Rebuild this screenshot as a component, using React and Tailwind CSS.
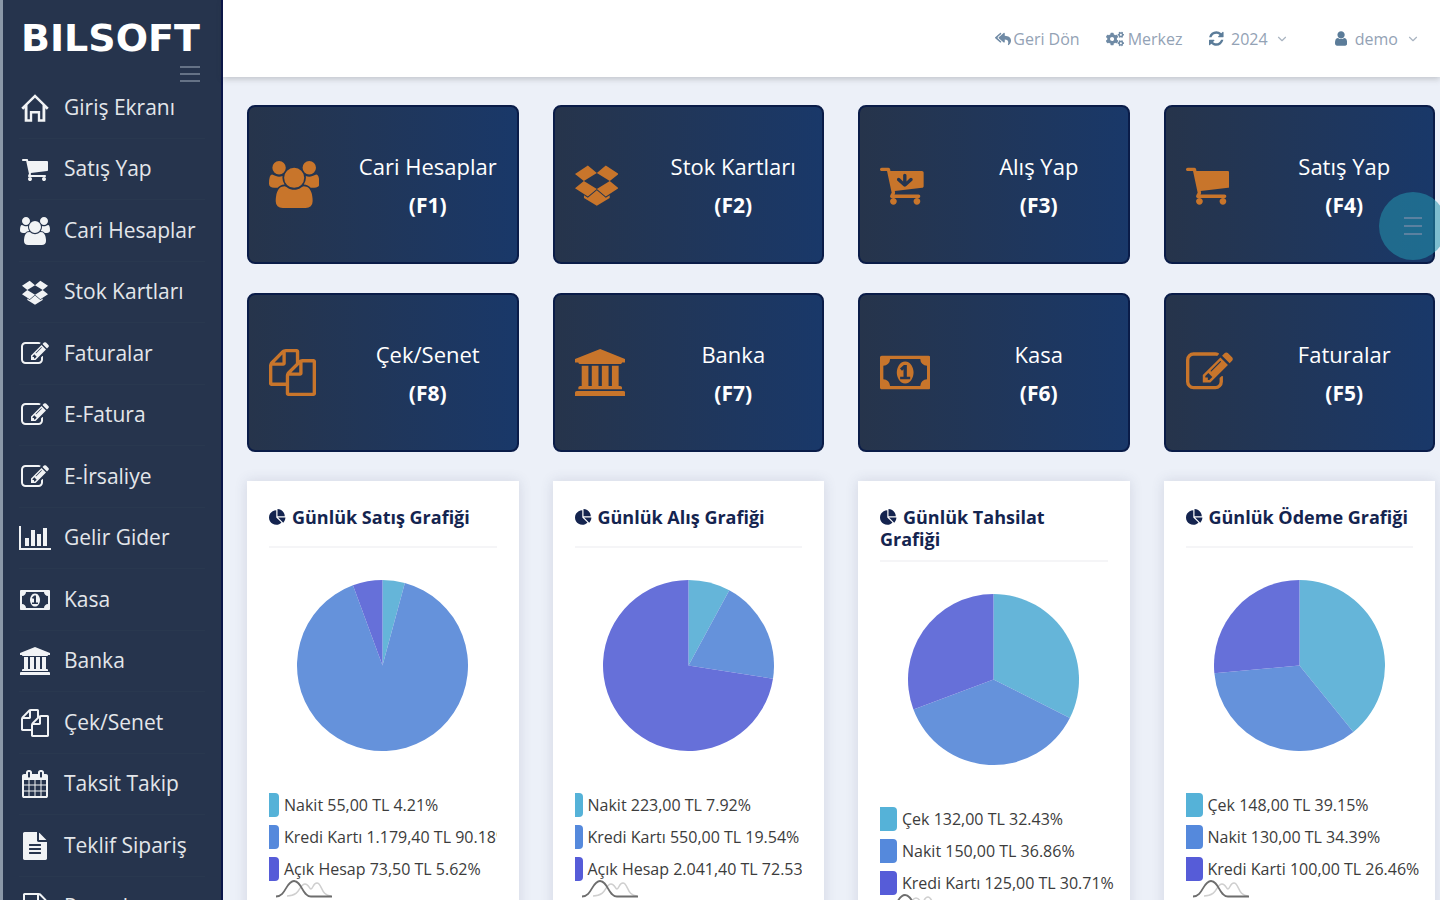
import React from "react";
import { FaReplyAll, FaCogs } from "react-icons/fa";
import { ChevronDown } from "lucide-react";

const CART =
  "M704 1536q0 52-38 90t-90 38-90-38-38-90 38-90 90-38 90 38 38 90zm896 0q0 52-38 90t-90 38-90-38-38-90 38-90 90-38 90 38 38 90zm128-1088v512q0 24-16.5 42.5t-40.5 21.5l-1044 122q13 60 13 70 0 16-24 64h920q26 0 45 19t19 45-19 45-45 19h-1024q-26 0-45-19t-19-45q0-11 8-31.5t16-36 21.5-40 15.5-29.5l-177-823h-204q-26 0-45-19t-19-45 19-45 45-19h256q16 0 28.5 6.5t19.5 15.5 13 24.5 8 26 5.5 29.5 4.5 26h1201q26 0 45 19t19 45z";

const ICONS = {
  cart: { box: "64 0 1664 1792", d: CART },
  cartDown: {
    box: "64 0 1664 1792",
    d:
      CART +
      "M1310 704q0-26-19-45t-45-19-45 19l-127 126v-233q0-26-19-45t-45-19-45 19-19 45v233l-127-126q-19-19-45-19t-45 19-19 45 19 45l236 216q19 19 45 19t45-19l236-216q19-19 19-45z",
  },
  users: {
    box: "0 0 1920 1792",
    d: "M593 896q-162 5-265 128h-134q-82 0-138-40.5t-56-118.5q0-353 124-353 6 0 43.5 21t97.5 42.5 119 21.5q67 0 133-23-5 37-5 66 0 139 81 256zm1071 637q0 120-73 189.5t-194 69.5h-874q-121 0-194-69.5t-73-189.5q0-53 3.5-103.5t14-109 26.5-108.5 43-97.5 62-81 85.5-53.5 111.5-20q10 0 43 21.5t73 48 107 48 135 21.5 135-21.5 107-48 73-48 43-21.5q61 0 111.5 20t85.5 53.5 62 81 43 97.5 26.5 108.5 14 109 3.5 103.5zm-1024-1277q0 106-75 181t-181 75-181-75-75-181 75-181 181-75 181 75 75 181zm704 384q0 159-112.5 271.5t-271.5 112.5-271.5-112.5-112.5-271.5 112.5-271.5 271.5-112.5 271.5 112.5 112.5 271.5zm576 225q0 78-56 118.5t-138 40.5h-134q-103-123-265-128 81-117 81-256 0-29-5-66 66 23 133 23 59 0 119-21.5t97.5-42.5 43.5-21q124 0 124 353zm-128-609q0 106-75 181t-181 75-181-75-75-181 75-181 181-75 181 75 75 181z",
  },
  dropbox: {
    box: "64 64 1664 1792",
    d: "M554 239l342 285-494 305-338-271zM1238 239l490 319-338 271-494-305zM402 829l494 305-342 285-490-319zM1390 829l338 271-490 319-342-285zM406 1371l147 96 343-284 343 284 147-96v108l-490 293-490-293z",
  },
  edit: {
    box: "0 0 1792 1792",
    d: "M888 1184l116-116-152-152-116 116v56h96v96h56zm440-720q-16-16-33 1l-350 350q-17 17-1 33t33-1l350-350q17-17 1-33zm80 594v190q0 119-84.5 203.5t-203.5 84.5h-832q-119 0-203.5-84.5t-84.5-203.5v-832q0-119 84.5-203.5t203.5-84.5h832q63 0 117 25 15 7 18 23 3 17-9 29l-49 49q-14 14-32 8-23-6-45-6h-832q-66 0-113 47t-47 113v832q0 66 47 113t113 47h832q66 0 113-47t47-113v-126q0-13 9-22l64-64q15-15 35-7t20 29zm-96-738l288 288-672 672h-288v-288zm444 132l-92 92-288-288 92-92q28-28 68-28t68 28l152 152q28 28 28 68t-28 68z",
  },
  chart: {
    box: "0 0 2048 1792",
    d: "M640 896v512h-256v-512h256zm384-512v1024h-256v-1024h256zm1024 1152v128h-2048v-1536h128v1408h1920zm-640-896v768h-256v-768h256zm384-384v1152h-256v-1152h256z",
  },
  money: {
    box: "0 0 1920 1792",
    d: "M768 1152h384v-96h-128v-448h-114l-148 137 77 80q42-37 55-57h2v288h-128v96zm512-256q0 70-21 142t-59.5 134-101.5 101-138 39-138-39-101.5-101-59.5-134-21-142 21-142 59.5-134 101.5-101 138-39 138 39 101.5 101 59.5 134 21 142zm512 256v-512q-106 0-181-75t-75-181h-1152q0 106-75 181t-181 75v512q106 0 181 75t75 181h1152q0-106 75-181t181-75zm128-832v1152q0 26-19 45t-45 19h-1792q-26 0-45-19t-19-45v-1152q0-26 19-45t45-19h1792q26 0 45 19t19 45z",
  },
  bank: {
    box: "0 0 1920 1792",
    d: "M960 0l960 384v128h-128q0 26-20.500 45t-48.5 19h-1526q-28 0-48.5-19t-20.500-45h-128v-128zm-704 640h256v768h128v-768h256v768h128v-768h256v768h128v-768h256v768h59q28 0 48.5 19t20.500 45v64h-1664v-64q0-26 20.500-45t48.5-19h59v-768zm1595 960q28 0 48.5 19t20.500 45v128h-1920v-128q0-26 20.500-45t48.5-19h1782z",
  },
  files: {
    box: "0 0 1792 1792",
    d: "M1696 384q40 0 68 28t28 68v1216q0 40-28 68t-68 28h-960q-40 0-68-28t-28-68v-288h-544q-40 0-68-28t-28-68v-672q0-40 20-88t48-76l408-408q28-28 76-48t88-20h416q40 0 68 28t28 68v328q68-40 128-40h416zm-544 213l-299 299h299v-299zm-640-384l-299 299h299v-299zm196 647l316-316v-416h-384v416q0 40-28 68t-68 28h-416v640h512v-256q0-40 20-88t48-76zm956 804v-1152h-384v416q0 40-28 68t-68 28h-416v640h896z",
  },
  calendar: {
    box: "64 0 1664 1792",
    d: "M192 1664h288v-288h-288v288zm352 0h320v-288h-320v288zm-352-352h288v-320h-288v320zm352 0h320v-320h-320v320zm-352-384h288v-288h-288v288zm736 736h320v-288h-320v288zm-384-736h320v-288h-320v288zm768 736h288v-288h-288v288zm-384-352h320v-320h-320v320zm-352-864v-288q0-13-9.5-22.5t-22.5-9.5h-64q-13 0-22.5 9.5t-9.5 22.5v288q0 13 9.5 22.5t22.5 9.5h64q13 0 22.5-9.5t9.5-22.5zm736 864h288v-320h-288v320zm-384-384h320v-288h-320v288zm384 0h288v-288h-288v288zm32-480v-288q0-13-9.5-22.5t-22.5-9.5h-64q-13 0-22.5 9.5t-9.5 22.5v288q0 13 9.5 22.5t22.5 9.5h64q13 0 22.5-9.5t9.5-22.5zm384-64v1280q0 52-38 90t-90 38h-1408q-52 0-90-38t-38-90v-1280q0-52 38-90t90-38h128v-96q0-66 47-113t113-47h64q66 0 113 47t47 113v96h384v-96q0-66 47-113t113-47h64q66 0 113 47t47 113v96h128q52 0 90 38t38 90z",
  },
  file: {
    box: "128 0 1536 1792",
    d: "M1596 476q14 14 28 36h-472v-472q22 14 36 28zm-476 164h544v1056q0 40-28 68t-68 28h-1344q-40 0-68-28t-28-68v-1600q0-40 28-68t68-28h800v544q0 40 28 68t68 28zm160 736v-64q0-14-9-23t-23-9h-704q-14 0-23 9t-9 23v64q0 14 9 23t23 9h704q14 0 23-9t9-23zm0-256v-64q0-14-9-23t-23-9h-704q-14 0-23 9t-9 23v64q0 14 9 23t23 9h704q14 0 23-9t9-23zm0-256v-64q0-14-9-23t-23-9h-704q-14 0-23 9t-9 23v64q0 14 9 23t23 9h704q14 0 23-9t9-23z",
  },
  fileOutline: {
    box: "128 0 1536 1792",
    d: "M1596 380q28 28 48 76t20 88v1152q0 40-28 68t-68 28h-1344q-40 0-68-28t-28-68v-1600q0-40 28-68t68-28h896q40 0 88 20t76 48zm-444-244v376h376q-10-29-22-41l-313-313q-12-12-41-22zm384 1528v-1024h-416q-40 0-68-28t-28-68v-416h-768v1536h1280z",
  },
  home: {
    box: "0 0 1792 1792",
    d: "M896 20L20 880l120 126 96-94v860h480v-520h360v520h480V912l96 94 120-126zM896 240l480 470v912h-150V1092H566v530H416V710z",
  },
  pie: {
    box: "0 0 1792 1792",
    d: "M768 890l546 546q-106 108-247.5 168t-298.5 60q-209 0-385.5-103t-279.5-279.5-103-385.5 103-385.5 279.500-279.500 385.500-103v762zm187 6h773q0 157-60 298.500t-168 247.500zm709-128h-768v-768q209 0 385.500 103t279.500 279.500 103 385.500z",
  },
  refresh: {
    box: "128 0 1536 1792",
    d: "M1639 1056q0 5-1 7-64 268-268 434.500t-478 166.500q-146 0-282.500-55t-243.500-157l-129 129q-19 19-45 19t-45-19-19-45v-448q0-26 19-45t45-19h448q26 0 45 19t19 45-19 45l-137 137q71 66 161 102t187 36q134 0 250-65t186-179q11-17 53-117 8-23 30-23h192q13 0 22.500 9.500t9.500 22.500zm25-800v448q0 26-19 45t-45 19h-448q-26 0-45-19t-19-45 19-45l138-138q-148-137-349-137-134 0-250 65t-186 179q-11 17-53 117-8 23-30 23h-199q-13 0-22.500-9.500t-9.500-22.500v-7q65-268 270-434.500t480-166.500q146 0 284 55.500t245 156.500l130-129q19-19 45-19t45 19 19 45z",
  },
  user: {
    box: "256 0 1280 1792",
    d: "M1536 1399q0 109-62.500 187t-150.500 78h-854q-88 0-150.500-78t-62.500-187q0-85 8.500-160.500t31.500-152 58.500-131 94-89 134.500-34.500q131 128 313 128t313-128q76 0 134.500 34.500t94 89 58.500 131 31.500 152 8.500 160.500zm-256-887q0 159-112.500 271.500t-271.500 112.500-271.500-112.500-112.500-271.500 112.500-271.500 271.500-112.500 271.500 112.500 112.500 271.500z",
  },
};

function Icon({ name, className }) {
  const icon = ICONS[name];
  return (
    <svg viewBox={icon.box} className={className} fill="currentColor" fillRule="evenodd" aria-hidden="true">
      <path d={icon.d} />
    </svg>
  );
}

const MENU = [
  ["home", "Giriş Ekranı"],
  ["cart", "Satış Yap"],
  ["users", "Cari Hesaplar"],
  ["dropbox", "Stok Kartları"],
  ["edit", "Faturalar"],
  ["edit", "E-Fatura"],
  ["edit", "E-İrsaliye"],
  ["chart", "Gelir Gider"],
  ["money", "Kasa"],
  ["bank", "Banka"],
  ["files", "Çek/Senet"],
  ["calendar", "Taksit Takip"],
  ["file", "Teklif Sipariş"],
  ["fileOutline", "Raporlar"],
];

const TILES = [
  ["users", "Cari Hesaplar", "F1"],
  ["dropbox", "Stok Kartları", "F2"],
  ["cartDown", "Alış Yap", "F3"],
  ["cart", "Satış Yap", "F4"],
  ["files", "Çek/Senet", "F8"],
  ["bank", "Banka", "F7"],
  ["money", "Kasa", "F6"],
  ["edit", "Faturalar", "F5"],
];

const CHARTS = [
  {
    title: "Günlük Satış Grafiği",
    swatch: "w-[10px]",
    clip: "overflow-x-clip",
    rows: [["Nakit 55,00 TL", 4.21], ["Kredi Kartı 1.179,40 TL", 90.18], ["Açık Hesap 73,50 TL", 5.62]],
  },
  {
    title: "Günlük Alış Grafiği",
    swatch: "w-[8px]",
    clip: "overflow-x-clip",
    rows: [["Nakit 223,00 TL", 7.92], ["Kredi Kartı 550,00 TL", 19.54], ["Açık Hesap 2.041,40 TL", 72.53]],
  },
  {
    title: "Günlük Tahsilat Grafiği",
    swatch: "w-[17px]",
    clip: "",
    rows: [["Çek 132,00 TL", 32.43], ["Nakit 150,00 TL", 36.86], ["Kredi Kartı 125,00 TL", 30.71]],
  },
  {
    title: "Günlük Ödeme Grafiği",
    swatch: "w-[17px]",
    clip: "",
    rows: [["Çek 148,00 TL", 39.15], ["Nakit 130,00 TL", 34.39], ["Kredi Karti 100,00 TL", 26.46]],
  },
];

const FILLS = ["#65b5d9", "#6592db", "#6670d9"];
const SWATCHES = ["bg-[#55b2d8]", "bg-[#5589dc]", "bg-[#565cd8]"];

function Pie({ values }) {
  const total = values.reduce((sum, v) => sum + v, 0);
  let start = 0;
  return (
    <svg viewBox="-100 -100 200 200" className="size-[171px]" role="img" aria-label="Pasta grafiği">
      {values.map((value, i) => {
        const end = start + value / total;
        const a = start * 2 * Math.PI;
        const b = end * 2 * Math.PI;
        const large = end - start > 0.5 ? 1 : 0;
        start = end;
        return (
          <path
            key={i}
            fill={FILLS[i]}
            d={`M0 0L${100 * Math.sin(a)} ${-100 * Math.cos(a)}A100 100 0 ${large} 1 ${100 * Math.sin(b)} ${-100 * Math.cos(b)}Z`}
          />
        );
      })}
    </svg>
  );
}

function ChartCard({ chart }) {
  return (
    <section className="min-w-0 bg-white px-[22px] pt-[25px] pb-10 shadow-[0_0_12px_rgba(60,70,100,0.15)]">
      <h2 className="min-h-[30px] text-[18px] leading-[22px] font-bold text-[#14244f]">
        <Icon name="pie" className="mr-[6px] inline-block h-[17px] w-[17px] align-[-2px]" />
        {chart.title}
      </h2>
      <hr className="mt-[10px] border-t-2 border-[#f5f5f7]" />
      <div className="mt-8 flex justify-center">
        <Pie values={chart.rows.map((r) => r[1])} />
      </div>
      <ul className={`mt-[38px] ${chart.clip}`}>
        {chart.rows.map(([label, value], i) => (
          <li key={label} className="flex h-8 items-center gap-[5px] text-[16px] whitespace-nowrap text-[#3c3c3c]">
            <span className={`h-6 shrink-0 rounded-r-[4px] ${chart.swatch} ${SWATCHES[i]}`} />
            <span>
              {label} {value}%
            </span>
          </li>
        ))}
      </ul>
      <svg viewBox="0 0 58 18" className="-mt-[5px] ml-[6px] h-[18px] w-[58px]" fill="none" aria-hidden="true">
        <path d="M12 16C26 16 24 4 30 4C34 4 34 9 36 9C38 9 38 3 42 3C47 3 46 16 56 16" stroke="#cfcfcf" strokeWidth="1.5" />
        <path d="M1 16.500C11 16.500 11 1 19 1C27 1 27 16.500 36 16.500H57" stroke="#6d6d6d" strokeWidth="1.8" />
      </svg>
    </section>
  );
}

export default function App() {
  return (
    <div className="flex h-screen overflow-hidden bg-[#ecf0f8] font-['Open_Sans',sans-serif]">
      <aside className="w-[223px] shrink-0 overflow-hidden border-r-2 border-l-[3px] border-r-[#0a154b] border-l-[#8b98a8] bg-[#26344d]">
        <div className="flex flex-col px-[18px] pt-[18px]">
          <a href="#" className="font-['DejaVu_Sans',sans-serif] text-[38px] leading-[40px] font-bold text-white">
            BILSOFT
          </a>
          <button type="button" aria-label="Menü" className="mt-2 mr-[3px] flex w-5 flex-col gap-[5px] self-end text-[#657286]">
            <span className="h-[2px] w-full bg-current" />
            <span className="h-[2px] w-full bg-current" />
            <span className="h-[2px] w-full bg-current" />
          </button>
        </div>
        <nav className="-mt-[5px] px-4">
          {MENU.map(([icon, label]) => (
            <a
              key={label}
              href="#"
              className="flex items-center gap-[13px] border-b border-[#29384f] text-[21px] font-medium whitespace-nowrap text-[#e3e6ea] odd:h-[62px] even:h-[61px]"
            >
              <span className="flex w-8 shrink-0 justify-center text-[#f1f3f5]">
                <Icon name={icon} className="h-7 w-auto" />
              </span>
              {label}
            </a>
          ))}
        </nav>
      </aside>

      <div className="flex min-w-0 flex-1 flex-col">
        <header className="relative flex h-[77px] shrink-0 items-center justify-end bg-white pr-5 text-[16px] text-[#93a2b5] shadow-[0_2px_6px_rgba(60,60,60,0.25)]">
          <a href="#" className="mr-[26px] flex items-center gap-[2px]">
            <FaReplyAll className="size-4 text-[#6f8aa5]" />
            Geri Dön
          </a>
          <a href="#" className="mr-[27px] flex items-center gap-[4px]">
            <FaCogs className="size-[18px] text-[#6f8aa5]" />
            Merkez
          </a>
          <button type="button" className="mr-[46px] flex items-center gap-[7px]">
            <Icon name="refresh" className="h-[17px] w-auto text-[#5b7c99]" />
            2024
            <ChevronDown className="size-[14px] text-[#a9b4c1]" />
          </button>
          <button type="button" className="flex items-center gap-[8px]">
            <Icon name="user" className="h-[17px] w-auto text-[#5b7c99]" />
            demo
            <ChevronDown className="size-[14px] text-[#a9b4c1]" />
          </button>
        </header>

        <main className="min-h-0 flex-1 overflow-y-auto pt-7 pr-[5px] pb-6 pl-6 [scrollbar-width:none]">
          <div className="grid grid-cols-4 gap-x-[34px] gap-y-[29px]">
            {TILES.map(([icon, label, key]) => (
              <a
                key={key}
                href="#"
                className="flex h-[159px] min-w-0 items-center rounded-lg border-2 border-[#0a1c48] bg-linear-to-r from-[#26344b] to-[#193869] text-white"
              >
                <span className="w-[90px] shrink-0 pl-5 text-[#c8752b]">
                  <Icon name={icon} className="h-[47px] w-auto" />
                </span>
                <span className="flex min-w-0 flex-1 flex-col pt-[2px] text-center leading-[39px] whitespace-nowrap">
                  <span className="text-[22px] font-medium">{label}</span>
                  <span className="text-[21px] font-bold">({key})</span>
                </span>
              </a>
            ))}
          </div>
          <div className="mt-[29px] grid grid-cols-4 items-start gap-x-[34px]">
            {CHARTS.map((chart) => (
              <ChartCard key={chart.title} chart={chart} />
            ))}
          </div>
        </main>
      </div>

      <button
        type="button"
        aria-label="Hızlı menü"
        className="fixed top-[192px] -right-[7px] flex size-[68px] flex-col items-center justify-center gap-[6px] rounded-full bg-[#2496af]/55"
      >
        <span className="h-[2px] w-[18px] bg-[#5b81a0]" />
        <span className="h-[2px] w-[18px] bg-[#5b81a0]" />
        <span className="h-[2px] w-[18px] bg-[#5b81a0]" />
      </button>
    </div>
  );
}
